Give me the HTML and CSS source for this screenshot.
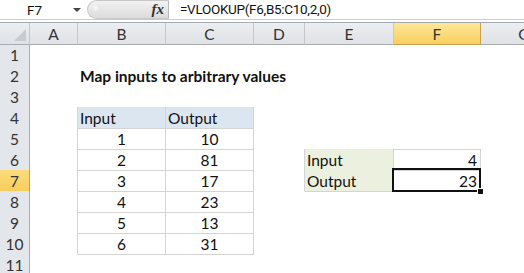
FILE: index.html
```html
<!DOCTYPE html>
<html lang="en">
<head>
  <meta charset="UTF-8" />
  <title>VLOOKUP – map inputs</title>
  <link rel="stylesheet" href="styles.css">
</head>
<body>

  <div class="formula-bar">
    <div class="name-box">
      <span class="name">F7</span>
      <span class="drop"></span>
    </div>
    <div class="fx-area">
      <span class="knob"></span>
      <span class="fx">fx</span>
    </div>
    <div class="formula">=VLOOKUP(F6,B5:C10,2,0)</div>
  </div>
  <div class="bar-gap"></div>

  <div class="sheet">
    <div class="row head">
      <div class="corner"></div><div>A</div><div>B</div><div>C</div><div>D</div><div>E</div><div class="sel">F</div><div>G</div>
    </div>
    <div class="row">
      <div class="rh">1</div><div></div><div></div><div></div><div></div><div></div><div></div><div></div>
    </div>
    <div class="row">
      <div class="rh">2</div><div></div><div class="title">Map inputs to arbitrary values</div><div></div><div></div><div></div><div></div><div></div>
    </div>
    <div class="row">
      <div class="rh">3</div><div></div><div class="bb"></div><div class="bb"></div><div></div><div></div><div></div><div></div>
    </div>
    <div class="row">
      <div class="rh">4</div><div class="br"></div><div class="tbl th">Input</div><div class="tbl th">Output</div><div></div><div></div><div></div><div></div>
    </div>
    <div class="row">
      <div class="rh">5</div><div class="br"></div><div class="tbl num">1</div><div class="tbl num">10</div><div></div><div class="bb"></div><div class="bb"></div><div></div>
    </div>
    <div class="row">
      <div class="rh">6</div><div class="br"></div><div class="tbl num">2</div><div class="tbl num">81</div><div class="br"></div><div class="tbl label">Input</div><div class="tbl val">4</div><div></div>
    </div>
    <div class="row">
      <div class="rh sel">7</div><div class="br"></div><div class="tbl num">3</div><div class="tbl num">17</div><div class="br"></div><div class="tbl label">Output</div><div class="tbl val active">23<span class="handle"></span></div><div></div>
    </div>
    <div class="row">
      <div class="rh">8</div><div class="br"></div><div class="tbl num">4</div><div class="tbl num">23</div><div></div><div></div><div></div><div></div>
    </div>
    <div class="row">
      <div class="rh">9</div><div class="br"></div><div class="tbl num">5</div><div class="tbl num">13</div><div></div><div></div><div></div><div></div>
    </div>
    <div class="row">
      <div class="rh">10</div><div class="br"></div><div class="tbl num">6</div><div class="tbl num">31</div><div></div><div></div><div></div><div></div>
    </div>
    <div class="row">
      <div class="rh">11</div><div></div><div></div><div></div><div></div><div></div><div></div><div></div>
    </div>
  </div>

</body>
</html>
```

FILE: styles.css
```css
body {
  margin: 0;
  padding: 0;
  background: white;
  font-family: Lato, "Liberation Sans", sans-serif;
  color: #111;
  overflow: hidden;
}

/* formula bar */
.formula-bar {
  display: flex;
  height: 19px;
  border-bottom: 1px solid #c9cdd2;
  font-family: Roboto, "Liberation Sans", sans-serif;
  font-size: 13.5px;
}
.name-box {
  width: 87px;
  display: flex;
  align-items: center;
  position: relative;
}
.name {
  margin-left: 27px;
}
.drop {
  position: absolute;
  left: 73px;
  top: 8px;
  border-left: 4px solid transparent;
  border-right: 4px solid transparent;
  border-top: 4px solid #444;
}
.fx-area {
  width: 82px;
  position: relative;
  background: linear-gradient(#f2f2f2, #dcdcdc);
  border-radius: 10px 0 0 10px;
  border: 1px solid #c7c7c7;
  border-right: 1px solid #b9b9b9;
  box-sizing: border-box;
  height: 19px;
}
.knob {
  position: absolute;
  left: 4px;
  top: 3px;
  width: 9px;
  height: 9px;
  border-radius: 50%;
  background: radial-gradient(circle at 40% 40%, #fafafa, #d6d6d6);
}
.fx {
  position: absolute;
  right: 4px;
  top: 0;
  font-family: "Liberation Serif", serif;
  font-style: italic;
  font-weight: bold;
  font-size: 15px;
  line-height: 17px;
  color: #333;
}
.formula {
  padding-left: 11px;
  line-height: 19px;
  letter-spacing: -0.3px;
}
.bar-gap {
  height: 2px;
  border-bottom: 1px solid #a5abb3;
}

/* grid */
.row {
  display: grid;
  grid-template-columns: 30px 48px 88px 88px 51px 89px 87px 87px;
  height: 21px;
}
.row > div {
  box-sizing: border-box;
  border-right: 1px solid transparent;
  border-bottom: 1px solid transparent;
  padding: 1px 3px 0;
  font-size: 15.5px;
  line-height: 20px;
  white-space: nowrap;
}
.head > div {
  background: linear-gradient(#eceef1, #dfe2e6);
  border-right-color: #c4c8ce;
  border-bottom-color: #a8adb4;
  text-align: center;
  color: #333;
}
.head .corner {
  position: relative;
}
.head .corner::after {
  content: "";
  position: absolute;
  right: 3px;
  bottom: 3px;
  border-left: 12px solid transparent;
  border-bottom: 12px solid #c8ccd1;
}
.head .sel {
  background: linear-gradient(#fde79a, #f8cf5e);
  border-right-color: #c9a04b;
  border-bottom-color: #c9a04b;
}
.row > .rh {
  background: #e3e6ea;
  border-right-color: #a8adb4;
  border-bottom-color: #c4c8ce;
  text-align: center;
  color: #333;
}
.row > .rh.sel {
  background: linear-gradient(#fbdc7b, #f7cd5d);
  border-right-color: #c9a04b;
  border-bottom-color: #c9a04b;
}

/* cells */
.row > .title {
  font-weight: bold;
  overflow: visible;
  padding-left: 2px;
}
.row > .bb {
  border-bottom-color: #d4d4d4;
}
.row > .br {
  border-right-color: #d4d4d4;
}
.row > .tbl {
  border-right-color: #d4d4d4;
  border-bottom-color: #d4d4d4;
}
.row > .th {
  background: #dce6f1;
  padding-left: 2px;
}
.row > .num {
  text-align: center;
}
.row > .label {
  background: #ebf1de;
  padding-left: 2px;
}
.row > .val {
  text-align: right;
  padding-right: 3px;
}

/* selected cell */
.row > .active {
  position: relative;
  overflow: visible;
}
.active::before {
  content: "";
  position: absolute;
  left: -2px;
  top: -2px;
  right: -1px;
  bottom: -1px;
  border: 2px solid #111;
}
.handle {
  position: absolute;
  right: -4px;
  bottom: -4px;
  width: 5px;
  height: 5px;
  background: #111;
  border: 1px solid white;
}
```
